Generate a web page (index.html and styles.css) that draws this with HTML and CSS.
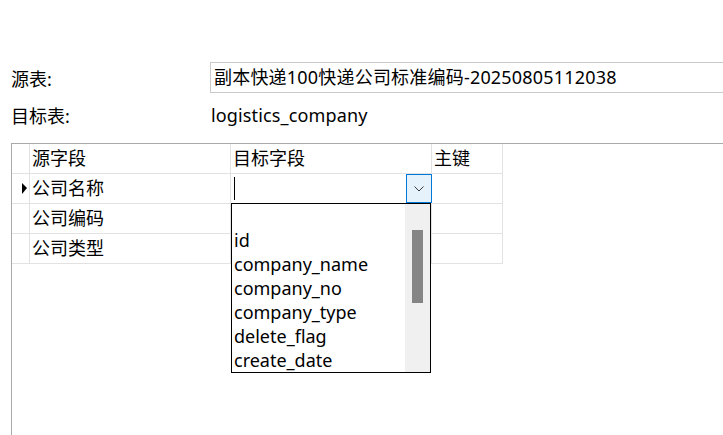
FILE: index.html
```html
<!DOCTYPE html>
<html lang="zh-CN">
<head>
<meta charset="utf-8">
<title>字段映射</title>
<link rel="stylesheet" href="styles.css">
</head>
<body>
<div class="page">
  <div class="form-row first">
    <div class="label">源表:</div>
    <div class="textbox">副本快递100快递公司标准编码-20250805112038</div>
  </div>
  <div class="form-row second">
    <div class="label">目标表:</div>
    <div class="value">logistics_company</div>
  </div>
  <div class="grid-wrap">
    <div class="grid">
      <div class="cell rh"></div>
      <div class="cell">源字段</div>
      <div class="cell">目标字段</div>
      <div class="cell">主键</div>

      <div class="cell rh"><span class="arrow"></span></div>
      <div class="cell">公司名称</div>
      <div class="cell editor">
        <span class="caret"></span>
        <span class="drop-btn">
          <svg width="10" height="6" viewBox="0 0 10 6"><polyline points="0.5,0.5 5,5 9.5,0.5" fill="none" stroke="#3a3a3a" stroke-width="1"/></svg>
        </span>
      </div>
      <div class="cell"></div>

      <div class="cell rh"></div>
      <div class="cell">公司编码</div>
      <div class="cell"></div>
      <div class="cell"></div>

      <div class="cell rh"></div>
      <div class="cell">公司类型</div>
      <div class="cell"></div>
      <div class="cell"></div>
    </div>
    <div class="popup">
      <ul class="items">
        <li>&nbsp;</li>
        <li>id</li>
        <li>company_name</li>
        <li>company_no</li>
        <li>company_type</li>
        <li>delete_flag</li>
        <li>create_date</li>
      </ul>
      <div class="scrollbar"><div class="thumb"></div></div>
    </div>
  </div>
</div>
</body>
</html>
```

FILE: styles.css
```css
html, body {
  margin: 0;
  padding: 0;
  background: #ffffff;
}
body {
  width: 723px;
  height: 435px;
  overflow: hidden;
  font-family: "Noto Sans", "Noto Sans CJK SC", sans-serif;
  font-size: 18px;
  color: #000000;
}
.page {
  padding-top: 62px;
}
.form-row {
  display: flex;
  align-items: center;
}
.form-row.first {
  height: 31px;
}
.form-row.second {
  height: 30px;
  margin-top: 7px;
}
.label {
  width: 199px;
  padding-left: 11px;
  flex: none;
}
.textbox {
  flex: 1;
  min-width: 0;
  height: 29px;
  border: 1px solid #cacaca;
  border-right: none;
  padding-left: 3px;
  line-height: 29px;
  white-space: nowrap;
  overflow: hidden;
  letter-spacing: 0.2px;
}
.value {
  padding-left: 1px;
  letter-spacing: 0.15px;
}
.grid-wrap {
  position: relative;
  margin-top: 13px;
  margin-left: 11px;
  height: 300px;
  border-left: 1px solid #a9a9a9;
  border-top: 1px solid #a9a9a9;
}
.grid {
  display: grid;
  grid-template-columns: 18px 201px 201px 71px;
  grid-auto-rows: 30px;
}
.cell {
  border-right: 1px solid #e2e2e2;
  border-bottom: 1px solid #e2e2e2;
  padding-left: 2px;
  line-height: 29px;
  white-space: nowrap;
  display: flex;
  align-items: center;
}
.cell.rh {
  padding-left: 0;
  padding-right: 2px;
  justify-content: flex-end;
}
.arrow {
  width: 0;
  height: 0;
  border-top: 5px solid transparent;
  border-bottom: 6px solid transparent;
  border-left: 5px solid #000000;
}
.editor {
  justify-content: space-between;
  padding-left: 3px;
  align-items: stretch;
}
.caret {
  width: 1px;
  background: #000000;
  margin: 3px 0 3px 0;
}
.drop-btn {
  width: 24px;
  margin-right: -1px;
  border: 1px solid #0078d7;
  background: #e5f1fb;
  display: flex;
  align-items: center;
  justify-content: center;
}
.popup {
  position: absolute;
  left: 219px;
  top: 59px;
  width: 198px;
  height: 168px;
  border: 1px solid #000000;
  background: #ffffff;
  display: flex;
}
.items {
  list-style: none;
  margin: 0;
  padding: 0 0 0 2px;
  flex: 1;
}
.items li {
  height: 24px;
  line-height: 24px;
  white-space: nowrap;
}
.scrollbar {
  width: 25px;
  background: #f0f0f0;
  padding-top: 26px;
  box-sizing: border-box;
  display: flex;
  justify-content: center;
  align-items: flex-start;
}
.thumb {
  width: 11px;
  height: 73px;
  background: #858585;
}
```
